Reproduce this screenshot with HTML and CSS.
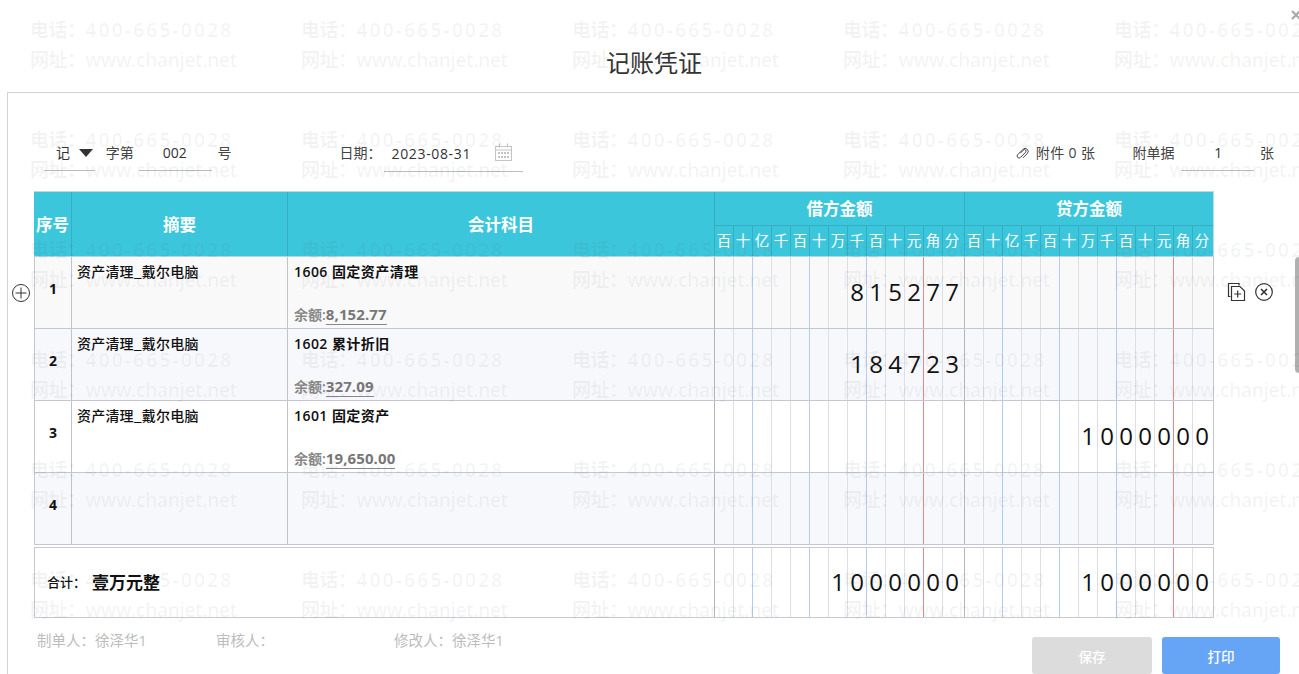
FILE: index.html
```html
<!DOCTYPE html>
<html lang="zh">
<head>
<meta charset="utf-8">
<title>记账凭证</title>
<link rel="stylesheet" href="styles.css">
</head>
<body>
<div class="page">
  <header class="title-bar"><h1 class="title">记账凭证</h1></header>
  <svg class="close" viewBox="0 0 12 12" width="12" height="12"><path d="M2 2l8 8M10 2l-8 8"/></svg>
  <main class="card">
    <div class="toolbar">
      <div class="field f-type">记<svg class="caret" viewBox="0 0 14 8" width="14" height="8"><path d="M0 0h14L7 8z"/></svg></div>
      <span class="lbl l-zi">字第</span>
      <div class="field f-no">002</div>
      <span class="lbl l-hao">号</span>
      <span class="lbl l-date">日期：</span>
      <div class="field f-date"><span class="date-val">2023-08-31</span>
        <svg class="cal" viewBox="0 0 17 18" width="17" height="18"><path d="M.5 3.500h16v14H.5zM4.500 .5v4M12.500 .5v4M.5 7h16"/><path class="dots" d="M3 10h11M3 14h11"/></svg>
      </div>
      <svg class="clip" viewBox="0 0 13 14" width="13" height="14"><path d="M4.300 6.200L7.400 3.100a1.500 1.500 0 0 1 2.200 2.100L4.500 10.400a1.900 1.900 0 0 1-2.800-2.700L7 2.300a3 3 0 0 1 4.300 4.200L7 10.800"/></svg>
      <span class="lbl l-att">附件 0 张</span>
      <span class="lbl l-bill">附单据</span>
      <div class="field f-bill">1</div>
      <span class="lbl l-zhang">张</span>
    </div>

    <section class="voucher">
      <div class="thead">
        <div class="th th-seq">序号</div>
        <div class="th th-sum">摘要</div>
        <div class="th th-acc">会计科目</div>
        <div class="th-money">
          <div class="th-group">借方金额</div>
          <div class="amt head"><span>百</span><span>十</span><span>亿</span><span>千</span><span>百</span><span>十</span><span>万</span><span>千</span><span>百</span><span>十</span><span>元</span><span>角</span><span>分</span></div>
        </div>
        <div class="th-money credit">
          <div class="th-group">贷方金额</div>
          <div class="amt head"><span>百</span><span>十</span><span>亿</span><span>千</span><span>百</span><span>十</span><span>万</span><span>千</span><span>百</span><span>十</span><span>元</span><span>角</span><span>分</span></div>
        </div>
      </div>

      <div class="row row-a">
        <svg class="add" viewBox="0 0 20 20" width="20" height="20"><circle cx="10" cy="10" r="8.500"/><path d="M10 4.500v11M4.500 10h11"/></svg>
        <div class="seq">1</div>
        <div class="sum">资产清理_戴尔电脑</div>
        <div class="acc"><div class="acc-name">1606 固定资产清理</div><div class="bal">余额:<b>8,152.77</b></div></div>
        <div class="amt"><span></span><span></span><span></span><span></span><span></span><span></span><span></span><span>8</span><span>1</span><span>5</span><span>2</span><span>7</span><span>7</span></div>
        <div class="amt credit"><span></span><span></span><span></span><span></span><span></span><span></span><span></span><span></span><span></span><span></span><span></span><span></span><span></span></div>
        <div class="actions">
          <svg viewBox="0 0 20 20" width="20" height="20"><path d="M3.500 14.500H1.500V1.500H12v2"/><path d="M4.500 4.500h8.500l4.500 4.500v9.500h-13z"/><path d="M10.700 8.500v7M7.200 12h7"/></svg>
          <svg viewBox="0 0 20 20" width="20" height="20"><circle cx="10" cy="10" r="8.300"/><path class="thick" d="M7 7l6 6M13 7l-6 6"/></svg>
        </div>
      </div>
      <div class="row row-b">
        <div class="seq">2</div>
        <div class="sum">资产清理_戴尔电脑</div>
        <div class="acc"><div class="acc-name">1602 累计折旧</div><div class="bal">余额:<b>327.09</b></div></div>
        <div class="amt"><span></span><span></span><span></span><span></span><span></span><span></span><span></span><span>1</span><span>8</span><span>4</span><span>7</span><span>2</span><span>3</span></div>
        <div class="amt credit"><span></span><span></span><span></span><span></span><span></span><span></span><span></span><span></span><span></span><span></span><span></span><span></span><span></span></div>
      </div>
      <div class="row row-c">
        <div class="seq">3</div>
        <div class="sum">资产清理_戴尔电脑</div>
        <div class="acc"><div class="acc-name">1601 固定资产</div><div class="bal">余额:<b>19,650.00</b></div></div>
        <div class="amt"><span></span><span></span><span></span><span></span><span></span><span></span><span></span><span></span><span></span><span></span><span></span><span></span><span></span></div>
        <div class="amt credit"><span></span><span></span><span></span><span></span><span></span><span></span><span>1</span><span>0</span><span>0</span><span>0</span><span>0</span><span>0</span><span>0</span></div>
      </div>
      <div class="row row-b">
        <div class="seq">4</div>
        <div class="sum"></div>
        <div class="acc"></div>
        <div class="amt"><span></span><span></span><span></span><span></span><span></span><span></span><span></span><span></span><span></span><span></span><span></span><span></span><span></span></div>
        <div class="amt credit"><span></span><span></span><span></span><span></span><span></span><span></span><span></span><span></span><span></span><span></span><span></span><span></span><span></span></div>
      </div>

      <div class="total">
        <div class="total-label"><span class="t-lbl">合计：</span><span class="t-val">壹万元整</span></div>
        <div class="amt"><span></span><span></span><span></span><span></span><span></span><span></span><span>1</span><span>0</span><span>0</span><span>0</span><span>0</span><span>0</span><span>0</span></div>
        <div class="amt credit"><span></span><span></span><span></span><span></span><span></span><span></span><span>1</span><span>0</span><span>0</span><span>0</span><span>0</span><span>0</span><span>0</span></div>
      </div>
    </section>

    <footer class="foot">
      <span class="who w1">制单人：徐泽华1</span>
      <span class="who w2">审核人：</span>
      <span class="who w3">修改人：徐泽华1</span>
      <button class="btn save">保存</button>
      <button class="btn print">打印</button>
    </footer>
  </main>

  <div class="scroll-thumb"></div>

  <div class="watermark" aria-hidden="true">
    <div class="wm"><p>电话：<span class="tel">400-665-0028</span></p><p>网址：<span class="web">www.chanjet.net</span></p></div><div class="wm"><p>电话：<span class="tel">400-665-0028</span></p><p>网址：<span class="web">www.chanjet.net</span></p></div><div class="wm"><p>电话：<span class="tel">400-665-0028</span></p><p>网址：<span class="web">www.chanjet.net</span></p></div><div class="wm"><p>电话：<span class="tel">400-665-0028</span></p><p>网址：<span class="web">www.chanjet.net</span></p></div><div class="wm"><p>电话：<span class="tel">400-665-0028</span></p><p>网址：<span class="web">www.chanjet.net</span></p></div>
    <div class="wm"><p>电话：<span class="tel">400-665-0028</span></p><p>网址：<span class="web">www.chanjet.net</span></p></div><div class="wm"><p>电话：<span class="tel">400-665-0028</span></p><p>网址：<span class="web">www.chanjet.net</span></p></div><div class="wm"><p>电话：<span class="tel">400-665-0028</span></p><p>网址：<span class="web">www.chanjet.net</span></p></div><div class="wm"><p>电话：<span class="tel">400-665-0028</span></p><p>网址：<span class="web">www.chanjet.net</span></p></div><div class="wm"><p>电话：<span class="tel">400-665-0028</span></p><p>网址：<span class="web">www.chanjet.net</span></p></div>
    <div class="wm"><p>电话：<span class="tel">400-665-0028</span></p><p>网址：<span class="web">www.chanjet.net</span></p></div><div class="wm"><p>电话：<span class="tel">400-665-0028</span></p><p>网址：<span class="web">www.chanjet.net</span></p></div><div class="wm"><p>电话：<span class="tel">400-665-0028</span></p><p>网址：<span class="web">www.chanjet.net</span></p></div><div class="wm"><p>电话：<span class="tel">400-665-0028</span></p><p>网址：<span class="web">www.chanjet.net</span></p></div><div class="wm"><p>电话：<span class="tel">400-665-0028</span></p><p>网址：<span class="web">www.chanjet.net</span></p></div>
    <div class="wm"><p>电话：<span class="tel">400-665-0028</span></p><p>网址：<span class="web">www.chanjet.net</span></p></div><div class="wm"><p>电话：<span class="tel">400-665-0028</span></p><p>网址：<span class="web">www.chanjet.net</span></p></div><div class="wm"><p>电话：<span class="tel">400-665-0028</span></p><p>网址：<span class="web">www.chanjet.net</span></p></div><div class="wm"><p>电话：<span class="tel">400-665-0028</span></p><p>网址：<span class="web">www.chanjet.net</span></p></div><div class="wm"><p>电话：<span class="tel">400-665-0028</span></p><p>网址：<span class="web">www.chanjet.net</span></p></div>
    <div class="wm"><p>电话：<span class="tel">400-665-0028</span></p><p>网址：<span class="web">www.chanjet.net</span></p></div><div class="wm"><p>电话：<span class="tel">400-665-0028</span></p><p>网址：<span class="web">www.chanjet.net</span></p></div><div class="wm"><p>电话：<span class="tel">400-665-0028</span></p><p>网址：<span class="web">www.chanjet.net</span></p></div><div class="wm"><p>电话：<span class="tel">400-665-0028</span></p><p>网址：<span class="web">www.chanjet.net</span></p></div><div class="wm"><p>电话：<span class="tel">400-665-0028</span></p><p>网址：<span class="web">www.chanjet.net</span></p></div>
    <div class="wm"><p>电话：<span class="tel">400-665-0028</span></p><p>网址：<span class="web">www.chanjet.net</span></p></div><div class="wm"><p>电话：<span class="tel">400-665-0028</span></p><p>网址：<span class="web">www.chanjet.net</span></p></div><div class="wm"><p>电话：<span class="tel">400-665-0028</span></p><p>网址：<span class="web">www.chanjet.net</span></p></div><div class="wm"><p>电话：<span class="tel">400-665-0028</span></p><p>网址：<span class="web">www.chanjet.net</span></p></div><div class="wm"><p>电话：<span class="tel">400-665-0028</span></p><p>网址：<span class="web">www.chanjet.net</span></p></div>
  </div>
</div>
</body>
</html>
```

FILE: styles.css
```css
* { box-sizing: border-box; }
html, body { margin: 0; padding: 0; background: #fff; }
body {
  font-family: "Open Sans", "Noto Sans CJK SC", sans-serif;
  color: #333;
  overflow: hidden;
}
.page { position: relative; width: 1299px; height: 674px; overflow: hidden; }

/* title */
.title-bar { height: 92px; display: flex; justify-content: center; padding: 44px 0 0 9px; }
.title { margin: 0; font-size: 24px; font-weight: 400; line-height: 36px; color: #333; font-family: "Noto Sans CJK SC", sans-serif; }
.close { position: absolute; top: 9px; right: -3px; }
.close path { stroke: #a8a8a8; stroke-width: 2.200; fill: none; }

/* card */
.card { margin-left: 7px; height: 582px; border-top: 1px solid #d2d2d2; border-left: 1px solid #d2d2d2; }

/* toolbar */
.toolbar { display: flex; align-items: flex-start; height: 98px; padding: 42px 25px 0 36px; font-size: 14px; }
.lbl { line-height: 35px; color: #444; white-space: nowrap; font-size: 14px; }
.field { height: 36px; line-height: 35px; border-bottom: 1px solid #bdbdbd; display: flex; align-items: center; color: #333; white-space: nowrap; font-size: 14px; }
.f-type { width: 51px; padding-left: 12px; }
.caret { margin-left: 9px; }
.caret path { fill: #333; }
.l-zi { margin-left: 11px; width: 28px; }
.f-no { margin-left: 5px; width: 73px; padding-left: 24px; }
.l-hao { margin-left: 6px; width: 14px; }
.l-date { margin-left: 108px; width: 39px; }
.f-date { margin-left: 5px; width: 140px; height: 37px; padding-left: 8px; }
.date-val { letter-spacing: .65px; }
.cal { margin: -2px 0 0 24px; flex: none; }
.cal path { fill: none; stroke: #c4c4c4; stroke-width: 1.200; }
.cal .dots { stroke: #b0b0b0; stroke-width: 1.500; stroke-dasharray: 2 1; }
.clip { margin: 12px 0 0 493px; flex: none; }
.clip path { fill: none; stroke: #444; stroke-width: 1; }
.l-att { margin-left: 7px; width: 60px; letter-spacing: .4px; }
.l-bill { margin-left: 37px; width: 44px; }
.f-bill { margin-left: 5px; width: 73px; padding-left: 33px; }
.l-zhang { margin-left: 6px; width: 14px; }

/* table */
.voucher { margin-left: 26px; width: 1180px; }
.thead {
  display: flex; height: 66px; background: #3cc6dc; color: #fff;
  border-top: 1px solid #c8d4d8; border-bottom: 1px solid #b8d4dc; border-right: 1px solid #b9dde4;
}
.th { display: flex; align-items: center; justify-content: center; font-size: 16.500px; font-weight: 700; font-family: "Noto Sans CJK SC", sans-serif; border-left: 1px solid #35aec3; padding-bottom: 1px; }
.th-seq { width: 37px; border-left: 0; white-space: nowrap; }
.th-sum { width: 216px; }
.th-acc { width: 427px; }
.th-money { width: 250px; display: flex; flex-direction: column; }
.th-money.credit { width: 249px; }
.th-group { height: 34px; border-left: 1px solid #35aec3; border-bottom: 1px solid #35aec3; text-align: center; font-size: 16.500px; font-weight: 700; line-height: 33px; font-family: "Noto Sans CJK SC", sans-serif; }

.amt { display: flex; width: 250px; height: 100%; flex: none; }
.amt.credit { width: 249px; }
.amt span {
  flex: 0 0 19px; text-align: center; font-size: 24px; line-height: 1; color: #111;
  border-left: 1px solid #dedee6; display: flex; align-items: center; justify-content: center; padding-bottom: 2px;
}
.amt span:nth-child(3n) { border-left-color: #b4cdee; }
.amt span:nth-child(12) { border-left-color: #e58a8a; }
.amt span:first-child { border-left-color: #b4b4bc; }
.amt span:last-child { flex: 1; padding-right: 3px; }
.amt.credit span:last-child { padding-right: 2px; }
.amt.head { flex: 1; height: auto; }
.amt.head span, .amt.head span:nth-child(n) { font-size: 14.500px; color: #fff; border-left-color: #35aec3; letter-spacing: 0; font-family: "Noto Sans CJK SC", sans-serif; }

.row {
  position: relative; display: flex; height: 72px;
  border-bottom: 1px solid #c6c6d2; border-left: 1px solid #c6c6d2; border-right: 1px solid #c6c6d2;
}
.row-a { background: #f9f9fa; }
.row-b { background: #f7f8fc; }
.row-c { background: #fff; }
.seq { width: 36px; display: flex; align-items: center; justify-content: center; font-size: 14px; font-weight: 700; color: #111; padding-bottom: 8px; }
.sum { width: 216px; padding: 5px 0 0 5px; border-left: 1px solid #c2c2ca; font-size: 14px; letter-spacing: .2px; line-height: 18px; font-weight: 500; color: #111; font-family: "Noto Sans CJK SC", sans-serif; }
.acc { width: 427px; padding: 6px 0 3px 6px; border-left: 1px solid #c2c2ca; display: flex; flex-direction: column; justify-content: space-between; }
.acc-name { font-size: 14px; letter-spacing: .45px; line-height: 18px; font-weight: 600; color: #111; }
.bal { font-size: 14px; line-height: 20px; font-weight: 600; color: #888; }
.bal b { display: inline-block; font-size: 15px; letter-spacing: .1px; font-weight: 700; color: #777; border-bottom: 1px solid #888; line-height: 19px; }
.add { position: absolute; left: -24px; top: 26px; }
.add circle, .add path { fill: none; stroke: #333; stroke-width: 1; }
.actions { position: absolute; left: 1192px; top: 25px; display: flex; gap: 7px; }
.actions svg { fill: none; stroke: #333; stroke-width: 1.200; }
.actions .thick { stroke-width: 1.600; }

.total { display: flex; height: 71px; margin-top: 2px; border: 1px solid #c8c8d0; }
.total-label { width: 680px; display: flex; align-items: center; padding-left: 12px; padding-bottom: 3px; }
.t-lbl { font-size: 13px; font-weight: 500; color: #111; font-family: "Noto Sans CJK SC", sans-serif; width: 45px; }
.t-val { font-size: 17px; font-weight: 700; color: #111; font-family: "Noto Sans CJK SC", sans-serif; }

/* footer */
.foot { display: flex; align-items: flex-start; margin-top: 1px; padding-left: 29px; }
.who { font-size: 14.500px; line-height: 20px; color: #bcbcbc; margin-top: 12px; white-space: nowrap; }
.w1 { width: 179px; }
.w2 { width: 178px; }
.w3 { width: 638px; }
.btn { flex: none; width: 120px; height: 37px; border: 0; border-radius: 3px; color: #fff; font: 500 13.500px "Noto Sans CJK SC", sans-serif; margin-top: 18px; padding: 0; }
.save { background: #dcdcdc; }
.print { background: #66a5f5; width: 118px; margin-left: 10px; }

.scroll-thumb { position: absolute; left: 1295px; top: 257px; width: 6px; height: 116px; border-radius: 4px 0 0 4px; background: #b0b0b0; }

/* watermark */
.watermark {
  position: absolute; left: 30px; top: 15px; width: 1355px; display: grid;
  grid-template-columns: repeat(5, 271px); grid-auto-rows: 110px; pointer-events: none;
}
.wm p { margin: 0; height: 30px; line-height: 30px; font-size: 19px; letter-spacing: -.5px; white-space: nowrap; color: rgba(60, 60, 70, .06); font-weight: 600; }
.tel { letter-spacing: 2.250px; }
.web { letter-spacing: -.3px; }
```
